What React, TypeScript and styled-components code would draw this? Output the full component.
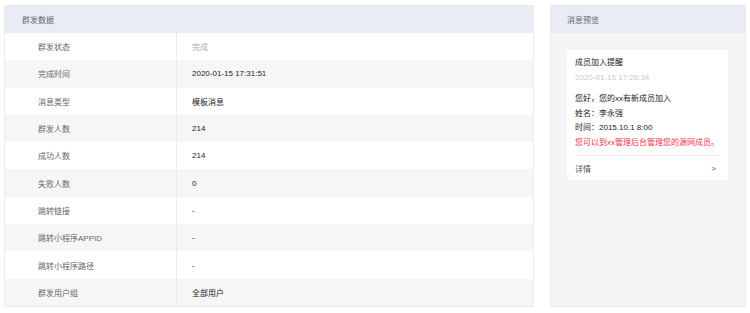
import { FC } from "react";
import styled, { createGlobalStyle } from "styled-components";

const GlobalStyle = createGlobalStyle`
  html, body {
    margin: 0;
    padding: 0;
    background: #ffffff;
    font-family: "Liberation Sans", "Noto Sans CJK SC", sans-serif;
  }
`;

const Page = styled.div`
  display: flex;
  flex-flow: row nowrap;
  align-items: flex-start;
  gap: 16px;
  padding: 5px 4px 0 4px;
  width: 750px;
  box-sizing: border-box;
`;

const Panel = styled.div<{ $width: number; $bg?: string }>`
  width: ${(p) => p.$width}px;
  height: 302px;
  box-sizing: border-box;
  border: 1px solid #ececec;
  border-top: none;
  background-color: ${(p) => p.$bg || "#ffffff"};
  display: flex;
  flex-flow: column nowrap;
`;

const PanelHeader = styled.div<{ $pad: number }>`
  height: 28px;
  flex: none;
  background-color: #e9ecf4;
  display: flex;
  align-items: center;
  padding-left: ${(p) => p.$pad}px;
  font-size: 8px;
  color: #666;
`;

const Row = styled.div<{ $odd: boolean }>`
  display: grid;
  grid-template-columns: 172px 1fr;
  height: 27.3px;
  background-color: ${(p) => (p.$odd ? "#f6f6f6" : "#ffffff")};
  font-size: 8px;
`;

const Label = styled.div`
  display: flex;
  align-items: center;
  padding-left: 33px;
  color: #666;
  border-right: 1px solid #ececec;
`;

const Value = styled.div<{ $muted?: boolean }>`
  display: flex;
  align-items: center;
  padding-left: 15px;
  color: ${(p) => (p.$muted ? "#aaa" : "#222")};
`;

const Card = styled.div`
  margin: 17px 17px 0 16px;
  background-color: #ffffff;
  padding: 6px 8px 0 8px;
  display: flex;
  flex-flow: column nowrap;
  font-size: 8px;
  color: #333;
`;

const Line = styled.div<{ $color?: string; $gap?: number }>`
  height: 14.5px;
  line-height: 14.5px;
  color: ${(p) => p.$color || "#222"};
  margin-top: ${(p) => p.$gap || 0}px;
  white-space: nowrap;
`;

const CardFooter = styled.div`
  margin-top: 5px;
  border-top: 1px solid #f2f2f2;
  height: 24px;
  display: flex;
  align-items: center;
  justify-content: space-between;
  padding-right: 4px;
  color: #555;
`;

const rows = [
  { id: 1, label: "群发状态", value: "完成", muted: true },
  { id: 2, label: "完成时间", value: "2020-01-15 17:31:51" },
  { id: 3, label: "消息类型", value: "模板消息" },
  { id: 4, label: "群发人数", value: "214" },
  { id: 5, label: "成功人数", value: "214" },
  { id: 6, label: "失败人数", value: "0" },
  { id: 7, label: "跳转链接", value: "-" },
  { id: 8, label: "跳转小程序APPID", value: "-" },
  { id: 9, label: "跳转小程序路径", value: "-" },
  { id: 10, label: "群发用户组", value: "全部用户" },
];

const App: FC = () => {
  return (
    <>
      <GlobalStyle />
      <Page>
        <Panel $width={530}>
          <PanelHeader $pad={17}>群发数据</PanelHeader>
          {rows.map((item, i) => (
            <Row key={item.id} $odd={i % 2 === 1}>
              <Label>{item.label}</Label>
              <Value $muted={item.muted}>{item.value}</Value>
            </Row>
          ))}
        </Panel>
        <Panel $width={196} $bg="#f5f5f5">
          <PanelHeader $pad={16}>消息预览</PanelHeader>
          <Card>
            <Line>成员加入提醒</Line>
            <Line $color="#c8c8c8">2020-01-15 17:26:34</Line>
            <Line $gap={7}>您好，您的xx有新成员加入</Line>
            <Line>姓名：李永强</Line>
            <Line>时间：2015.10.1 8:00</Line>
            <Line $color="#f5333f">您可以到xx管理后台管理您的源网成员。</Line>
            <CardFooter>
              <span>详情</span>
              <span>&gt;</span>
            </CardFooter>
          </Card>
        </Panel>
      </Page>
    </>
  );
};

export default App;
